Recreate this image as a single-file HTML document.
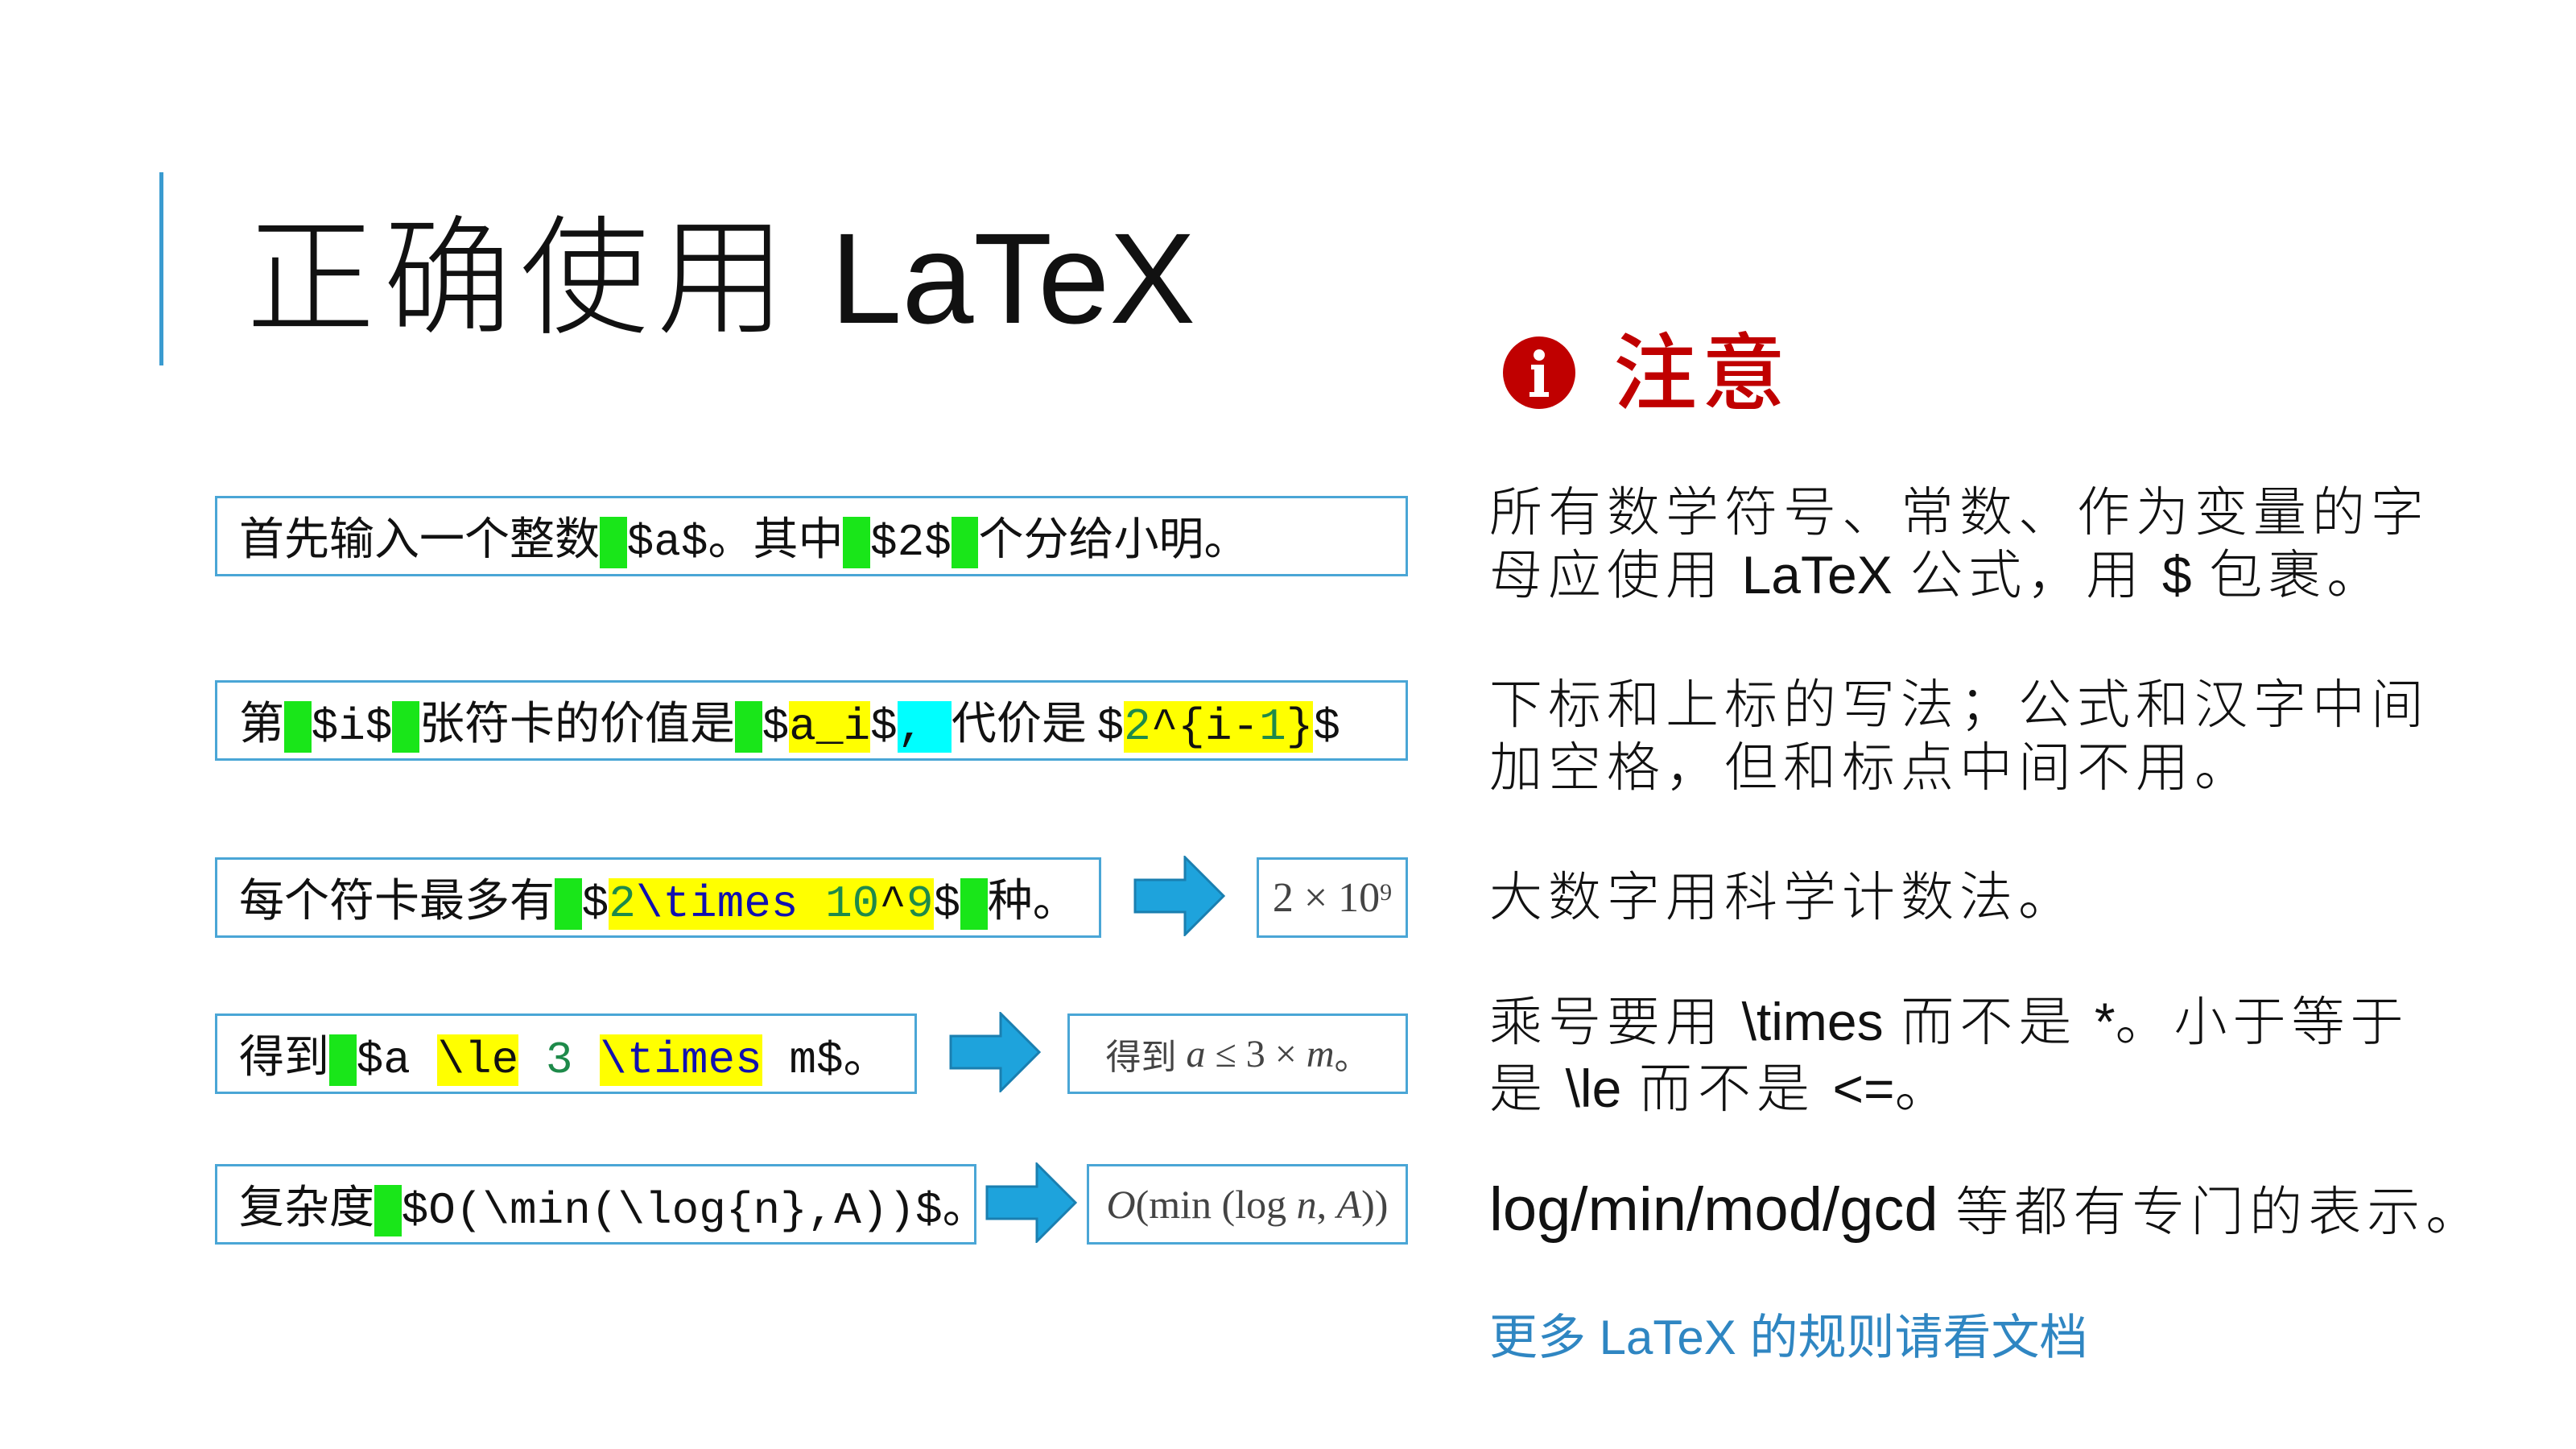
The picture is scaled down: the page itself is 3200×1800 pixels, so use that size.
<!DOCTYPE html>
<html><head><meta charset="utf-8"><style>
html,body{margin:0;padding:0;background:#fff;}
body{width:3200px;height:1800px;position:relative;overflow:hidden;font-family:"Liberation Sans","Noto Sans CJK SC",sans-serif;}
.a{position:absolute;}
.vl{left:198px;top:214px;width:5px;height:240px;background:#3a9bd0;}
.title{left:306px;top:236px;font-size:160px;font-weight:300;color:#111;font-family:"Noto Sans CJK SC",sans-serif;letter-spacing:10px;white-space:nowrap;line-height:1.2;}
.box{position:absolute;border:3px solid #4aa6d6;box-sizing:border-box;height:100px;line-height:94px;padding-left:27px;white-space:pre;font-size:56px;color:#111;font-family:"Noto Sans CJK SC",sans-serif;}
.m{font-family:"Liberation Mono",monospace;font-size:56px;}
.g{background:#19e619;}
.y{background:#ffff00;}
.c{background:#00ffff;}
.n{color:#1e8a4a;}
.b{color:#1010b0;}
.res{position:absolute;border:3px solid #4aa6d6;box-sizing:border-box;height:100px;display:flex;align-items:center;justify-content:center;white-space:nowrap;font-family:"Liberation Serif",serif;font-size:52px;color:#444;}
.res i{font-style:italic;}
.arr{position:absolute;}
.rt{position:absolute;left:1850px;font-family:"Noto Sans CJK SC",sans-serif;font-weight:300;font-size:66px;letter-spacing:7px;color:#111;white-space:nowrap;line-height:78px;}
.rt .l{font-family:"Liberation Sans",sans-serif;letter-spacing:0;font-weight:400;}
</style></head><body>
<div class="a vl"></div>
<div class="a title">正确使用 <span style="font-family:'Liberation Sans',sans-serif;letter-spacing:0;font-weight:400">LaTeX</span></div>

<svg class="a" style="left:1866px;top:417px" width="92" height="92" viewBox="0 0 92 92"><circle cx="46" cy="46" r="45" fill="#c00000"/><circle cx="46" cy="24" r="7" fill="#fff"/><path d="M36 36h16v34h6v6H34v-6h6V42h-4z" fill="#fff"/></svg>
<div class="a" style="left:2004px;top:393px;font-size:104px;color:#c00000;font-family:'Noto Sans CJK SC',sans-serif;font-weight:500;line-height:1.2;letter-spacing:6px;">注意</div>

<div class="box" style="left:267px;top:616px;width:1482px;">首先输入一个整数<span class="m g">&nbsp;</span><span class="m">$a$</span>。其中<span class="m g">&nbsp;</span><span class="m">$2$</span><span class="m g">&nbsp;</span>个分给小明。</div>

<div class="box" style="left:267px;top:845px;width:1482px;">第<span class="m g">&nbsp;</span><span class="m">$i$</span><span class="m g">&nbsp;</span>张符卡的价值是<span class="m g">&nbsp;</span><span class="m">$<span class="y">a_i</span>$<span class="c">,&nbsp;</span></span>代价是 <span class="m">$<span class="y"><span class="n">2</span>^{i-<span class="n">1</span>}</span>$</span></div>

<div class="box" style="left:267px;top:1065px;width:1101px;">每个符卡最多有<span class="m g">&nbsp;</span><span class="m">$<span class="y"><span class="n">2</span><span class="b">\times</span>&nbsp;<span class="n">10</span>^<span class="n">9</span></span>$</span><span class="m g">&nbsp;</span>种。</div>
<svg class="arr" style="left:1408px;top:1063px" width="116" height="100" viewBox="0 0 116 100"><path d="M2 30H64V2L112 50L64 98V70H2Z" fill="#1ea3dc" stroke="#1a7fb0" stroke-width="3"/></svg>
<div class="res" style="left:1561px;top:1065px;width:188px;">2 × 10<sup style="font-size:30px;position:relative;top:-6px">9</sup></div>

<div class="box" style="left:267px;top:1259px;width:872px;">得到<span class="m g">&nbsp;</span><span class="m">$a&nbsp;<span class="y">\le</span>&nbsp;<span class="n">3</span>&nbsp;<span class="y b">\times</span>&nbsp;m$</span>。</div>
<svg class="arr" style="left:1179px;top:1257px" width="116" height="100" viewBox="0 0 116 100"><path d="M2 30H64V2L112 50L64 98V70H2Z" fill="#1ea3dc" stroke="#1a7fb0" stroke-width="3"/></svg>
<div class="res" style="left:1326px;top:1259px;width:423px;font-size:48px;"><span style="font-family:'Noto Sans CJK SC',sans-serif;font-size:44px;">得到</span>&nbsp;<i>a</i>&nbsp;≤&nbsp;3&nbsp;×&nbsp;<i>m</i><span style="font-family:'Noto Sans CJK SC',sans-serif;font-size:44px;">。</span></div>

<div class="box" style="left:267px;top:1446px;width:946px;">复杂度<span class="m g">&nbsp;</span><span class="m">$O(\min(\log{n},A))$</span>。</div>
<svg class="arr" style="left:1224px;top:1444px" width="116" height="100" viewBox="0 0 116 100"><path d="M2 30H64V2L112 50L64 98V70H2Z" fill="#1ea3dc" stroke="#1a7fb0" stroke-width="3"/></svg>
<div class="res" style="left:1350px;top:1446px;width:399px;font-size:50px;"><i>O</i>(min&nbsp;(log&nbsp;<i>n</i>,&nbsp;<i>A</i>))</div>

<div class="rt" style="top:592px;">所有数学符号、常数、作为变量的字<br>母应使用 <span class="l">LaTeX</span> 公式，用 <span class="l">$</span> 包裹。</div>
<div class="rt" style="top:831px;">下标和上标的写法；公式和汉字中间<br>加空格，但和标点中间不用。</div>
<div class="rt" style="top:1070px;">大数字用科学计数法。</div>
<div class="rt" style="top:1225px;">乘号要用 <span class="l">\times</span> 而不是 <span class="l">*</span>。小于等于<br>是 <span class="l">\le</span> 而不是 <span class="l">&lt;=</span>。</div>
<div class="rt" style="top:1461px;"><span class="l" style="font-size:76px">log/min/mod/gcd</span> 等都有专门的表示。</div>
<div class="rt" style="top:1618px;color:#2f86c2;font-size:60px;letter-spacing:0;font-weight:400;"><span class="l" style="font-weight:300">更多 LaTeX 的规则请看文档</span></div>
</body></html>
